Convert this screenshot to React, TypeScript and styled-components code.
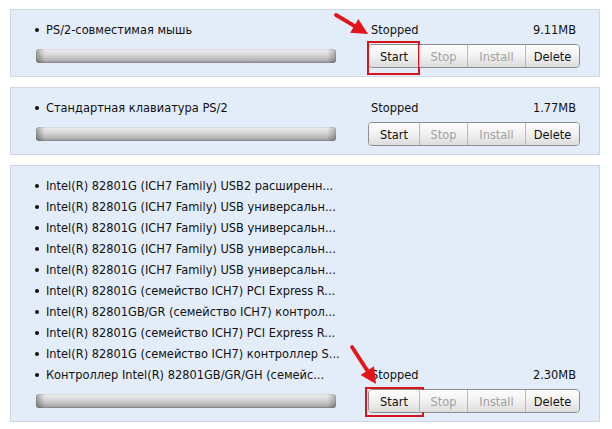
import React from "react";
import styled, { createGlobalStyle } from "styled-components";

const GlobalStyle = createGlobalStyle`
  html, body { margin: 0; padding: 0; background: #ffffff; }
  body { font-family: "DejaVu Sans Condensed", "DejaVu Sans", sans-serif; font-size: 12.7px; color: #111; }
`;

const Page = styled.div`
  position: relative;
  width: 612px;
  height: 429px;
  padding: 9px 12px 0 10px;
  box-sizing: border-box;
  display: flex;
  flex-direction: column;
  align-items: stretch;
  gap: 10px;
`;

const Panel = styled.section`
  display: grid;
  grid-template-columns: minmax(0, 1fr) 212px;
  column-gap: 30px;
  padding: 9px 19px 8px 24px;
  background: #e3edfa;
  border: 1px solid #cdd8e3;
  flex: none;
`;

const LeftCol = styled.div`
  display: flex;
  flex-direction: column;
  min-width: 0;
`;

const RightCol = styled.div`
  display: flex;
  flex-direction: column;
  justify-content: flex-end;
`;

const List = styled.ul`
  list-style: none;
  margin: 0;
  padding: 0;
`;

const Item = styled.li`
  position: relative;
  height: 21px;
  line-height: 21px;
  padding-left: 11px;
  white-space: nowrap;
  &::before {
    content: "";
    position: absolute;
    left: 0;
    top: 9px;
    width: 4px;
    height: 4px;
    border-radius: 50%;
    background: #111;
  }
`;

const BarRow = styled.div`
  height: 24px;
  margin-top: 4px;
  display: flex;
  align-items: center;
`;

const Bar = styled.div`
  width: 300px;
  height: 14px;
  margin-left: 1px;
  border-radius: 3px;
  background:
    linear-gradient(to right, rgba(0,0,0,0.3), rgba(0,0,0,0) 3%, rgba(0,0,0,0) 97%, rgba(0,0,0,0.25)),
    linear-gradient(to bottom, #f0f0f0 0%, #d8d8d8 40%, #b8b8b8 75%, #949494 100%);
  box-shadow: inset 0 0 0 1px rgba(0,0,0,0.08);
`;

const StatusRow = styled.div`
  height: 21px;
  line-height: 21px;
  display: flex;
  justify-content: space-between;
  padding: 0 4px 0 3px;
`;

const ButtonGroup = styled.div`
  margin-top: 4px;
  height: 24px;
  display: flex;
  border: 1px solid #8d8d8d;
  border-radius: 4px;
  box-sizing: border-box;
  width: 212px;
`;

const Btn = styled.div<{ $w: number; $disabled?: boolean; $first?: boolean; $last?: boolean }>`
  position: relative;
  width: ${(p) => p.$w}px;
  height: 100%;
  display: flex;
  align-items: center;
  justify-content: center;
  font-size: 12.7px;
  color: ${(p) => (p.$disabled ? "#a2a2a2" : "#111")};
  background: linear-gradient(to bottom, #fdfdfd 0%, #f1f1f1 50%, #dcdcdc 100%);
  border-left: ${(p) => (p.$first ? "none" : "1px solid #b9b9b9")};
  border-radius: ${(p) => (p.$first ? "3px 0 0 3px" : p.$last ? "0 3px 3px 0" : "0")};
  box-sizing: border-box;
`;

const Highlight = styled.div<{ $t: number; $r: number; $b: number; $l: number }>`
  position: absolute;
  top: ${(p) => p.$t}px;
  right: ${(p) => p.$r}px;
  bottom: ${(p) => p.$b}px;
  left: ${(p) => p.$l}px;
  border: 2px solid #d8151c;
  pointer-events: none;
`;

const Overlay = styled.svg`
  position: absolute;
  left: 0;
  top: 0;
  pointer-events: none;
`;

type Box = { t: number; r: number; b: number; l: number };

function Arrow({ x1, y1, x2, y2 }: { x1: number; y1: number; x2: number; y2: number }) {
  const dx = x2 - x1;
  const dy = y2 - y1;
  const len = Math.hypot(dx, dy);
  const ux = dx / len;
  const uy = dy / len;
  const hl = 16;
  const hw = 8;
  const bx = x2 - ux * hl;
  const by = y2 - uy * hl;
  const px = -uy;
  const py = ux;
  const pts = `${x2},${y2} ${bx + px * hw},${by + py * hw} ${bx - px * hw},${by - py * hw}`;
  return (
    <g>
      <line x1={x1} y1={y1} x2={bx + ux * 3} y2={by + uy * 3} stroke="#e3141b" strokeWidth={3.8} strokeLinecap="round" />
      <polygon points={pts} fill="#e3141b" />
    </g>
  );
}

type Device = {
  names: string[];
  size: string;
  highlight?: Box;
};

function DevicePanel({ d }: { d: Device }) {
  return (
    <Panel>
      <LeftCol>
        <List>
          {d.names.map((n, i) => (
            <Item key={i}>{n}</Item>
          ))}
        </List>
        <BarRow>
          <Bar />
        </BarRow>
      </LeftCol>
      <RightCol>
        <StatusRow>
          <span>Stopped</span>
          <span>{d.size}</span>
        </StatusRow>
        <ButtonGroup>
          <Btn $w={50} $first>
            Start
            {d.highlight && (
              <Highlight $t={d.highlight.t} $r={d.highlight.r} $b={d.highlight.b} $l={d.highlight.l} />
            )}
          </Btn>
          <Btn $w={48} $disabled>Stop</Btn>
          <Btn $w={58} $disabled>Install</Btn>
          <Btn $w={54} $last>Delete</Btn>
        </ButtonGroup>
      </RightCol>
    </Panel>
  );
}

const devices: Device[] = [
  { names: ["PS/2-совместимая мышь"], size: "9.11MB", highlight: { t: -4, r: -1, b: -8, l: -2 } },
  { names: ["Стандартная клавиатура PS/2"], size: "1.77MB" },
  {
    names: [
      "Intel(R) 82801G (ICH7 Family) USB2 расширенн...",
      "Intel(R) 82801G (ICH7 Family) USB универсальн...",
      "Intel(R) 82801G (ICH7 Family) USB универсальн...",
      "Intel(R) 82801G (ICH7 Family) USB универсальн...",
      "Intel(R) 82801G (ICH7 Family) USB универсальн...",
      "Intel(R) 82801G (семейство ICH7) PCI Express R...",
      "Intel(R) 82801GB/GR (семейство ICH7) контрол...",
      "Intel(R) 82801G (семейство ICH7) PCI Express R...",
      "Intel(R) 82801G (семейство ICH7) контроллер S...",
      "Контроллер Intel(R) 82801GB/GR/GH (семейс...",
    ],
    size: "2.30MB",
    highlight: { t: -3, r: -5, b: -5, l: -4 },
  },
];

export default function App() {
  return (
    <>
      <GlobalStyle />
      <Page>
        {devices.map((d, i) => (
          <DevicePanel key={i} d={d} />
        ))}
        <Overlay width={612} height={429} viewBox="0 0 612 429">
          <Arrow x1={336} y1={15} x2={368} y2={34} />
          <Arrow x1={352} y1={347} x2={376} y2={384} />
        </Overlay>
      </Page>
    </>
  );
}
